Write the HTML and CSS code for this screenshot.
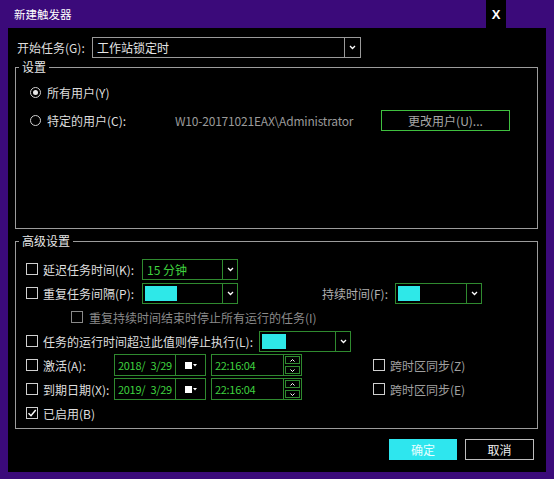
FILE: index.html
```html
<!DOCTYPE html>
<html lang="zh-CN">
<head>
<meta charset="utf-8">
<title>新建触发器</title>
<link rel="stylesheet" href="styles.css">
</head>
<body>
<div class="window">
  <div class="titlebar">
    <span class="title">新建触发器</span>
    <span class="close">X</span>
  </div>
  <div class="content">
    <div class="start-row">
      <span class="start-label">开始任务(G):</span>
      <div class="combo gray w-start">
        <span class="combo-text">工作站锁定时</span>
        <span class="drop gray"><svg width="7" height="5" viewBox="0 0 7 5"><path d="M1 1l2.5 2.5L6 1" stroke="#fff" fill="none" stroke-width="1.3"/></svg></span>
      </div>
    </div>

    <div class="group g-settings">
      <span class="legend">设置</span>
      <div class="radio-row">
        <span class="radio on"></span>
        <span class="rlabel">所有用户(Y)</span>
      </div>
      <div class="radio-row second">
        <span class="radio"></span>
        <span class="rlabel rl-wide">特定的用户(C):</span>
        <span class="user">W10-20171021EAX\Administrator</span>
        <span class="btn-change">更改用户(U)...</span>
      </div>
    </div>

    <div class="group g-adv">
      <span class="legend">高级设置</span>

      <div class="row">
        <span class="cb"></span>
        <span class="lbl l-99">延迟任务时间(K):</span>
        <div class="combo green w96">
          <span class="combo-text green-text">15 分钟</span>
          <span class="drop"><svg width="7" height="5" viewBox="0 0 7 5"><path d="M1 1l2.5 2.5L6 1" stroke="#fff" fill="none" stroke-width="1.3"/></svg></span>
        </div>
      </div>

      <div class="row">
        <span class="cb"></span>
        <span class="lbl l-99">重复任务间隔(P):</span>
        <div class="combo green w96">
          <span class="combo-text"><span class="cyan c32"></span></span>
          <span class="drop"><svg width="7" height="5" viewBox="0 0 7 5"><path d="M1 1l2.5 2.5L6 1" stroke="#fff" fill="none" stroke-width="1.3"/></svg></span>
        </div>
        <span class="lbl l-dur">持续时间(F):</span>
        <div class="combo green w87">
          <span class="combo-text"><span class="cyan c22"></span></span>
          <span class="drop"><svg width="7" height="5" viewBox="0 0 7 5"><path d="M1 1l2.5 2.5L6 1" stroke="#fff" fill="none" stroke-width="1.3"/></svg></span>
        </div>
      </div>

      <div class="row sub">
        <span class="cb dim"></span>
        <span class="lbl dim-text">重复持续时间结束时停止所有运行的任务(I)</span>
      </div>

      <div class="row">
        <span class="cb"></span>
        <span class="lbl l-216">任务的运行时间超过此值则停止执行(L):</span>
        <div class="combo green w92">
          <span class="combo-text"><span class="cyan c24"></span></span>
          <span class="drop"><svg width="7" height="5" viewBox="0 0 7 5"><path d="M1 1l2.5 2.5L6 1" stroke="#fff" fill="none" stroke-width="1.3"/></svg></span>
        </div>
      </div>

      <div class="row">
        <span class="cb"></span>
        <span class="lbl l-71">激活(A):</span>
        <div class="date">
          <span class="date-text">2018/ 3/29</span>
          <span class="cal"><span class="sq"></span><svg width="4" height="3" viewBox="0 0 4 3"><path d="M0 0h4L2 2.5z" fill="#fff"/></svg></span>
        </div>
        <div class="time">
          <span class="date-text">22:16:04</span>
          <span class="spin">
            <span class="sp"><svg width="5" height="3" viewBox="0 0 5 3"><path d="M0.5 2.5L2.5 0.5 4.5 2.5" stroke="#fff" fill="none" stroke-width="1"/></svg></span>
            <span class="sp"><svg width="5" height="3" viewBox="0 0 5 3"><path d="M0.5 0.5L2.5 2.5 4.5 0.5" stroke="#fff" fill="none" stroke-width="1"/></svg></span>
          </span>
        </div>
        <span class="cb tz"></span>
        <span class="lbl tz-text">跨时区同步(Z)</span>
      </div>

      <div class="row">
        <span class="cb"></span>
        <span class="lbl l-71">到期日期(X):</span>
        <div class="date">
          <span class="date-text">2019/ 3/29</span>
          <span class="cal"><span class="sq"></span><svg width="4" height="3" viewBox="0 0 4 3"><path d="M0 0h4L2 2.5z" fill="#fff"/></svg></span>
        </div>
        <div class="time">
          <span class="date-text">22:16:04</span>
          <span class="spin">
            <span class="sp"><svg width="5" height="3" viewBox="0 0 5 3"><path d="M0.5 2.5L2.5 0.5 4.5 2.5" stroke="#fff" fill="none" stroke-width="1"/></svg></span>
            <span class="sp"><svg width="5" height="3" viewBox="0 0 5 3"><path d="M0.5 0.5L2.5 2.5 4.5 0.5" stroke="#fff" fill="none" stroke-width="1"/></svg></span>
          </span>
        </div>
        <span class="cb tz"></span>
        <span class="lbl tz-text">跨时区同步(E)</span>
      </div>

      <div class="row">
        <span class="cb checked"><svg width="10" height="10" viewBox="0 0 10 10"><path d="M1.5 5.2L4 7.7 8.7 2" stroke="#fff" fill="none" stroke-width="1.5"/></svg></span>
        <span class="lbl">已启用(B)</span>
      </div>
    </div>

    <div class="buttons">
      <span class="btn ok">确定</span>
      <span class="btn cancel">取消</span>
    </div>
  </div>
</div>
</body>
</html>
```

FILE: styles.css
```css
* { box-sizing: border-box; }
html, body { margin: 0; padding: 0; }
body {
  width: 554px;
  height: 479px;
  background: #3b0a7a;
  font-family: "Noto Sans CJK SC", "Noto Sans", sans-serif;
  font-size: 12px;
  color: #dedede;
  overflow: hidden;
}
.window { width: 554px; height: 479px; }
.titlebar {
  height: 28px;
  display: flex;
  align-items: center;
  padding-left: 14px;
  color: #fff;
}
.title { flex: 1; font-size: 11.5px; line-height: 28px; }
.close {
  width: 20px;
  height: 28px;
  margin-right: 48px;
  background: #000;
  color: #fff;
  font-family: "Liberation Sans", Arial, sans-serif;
  font-weight: bold;
  font-size: 13px;
  display: flex;
  align-items: center;
  justify-content: center;
}
.content {
  margin: 0 8px;
  height: 444px;
  background: #000;
  display: flex;
  flex-direction: column;
  overflow: hidden;
}
.start-row {
  margin-top: 9px;
  padding-left: 9px;
  display: flex;
  align-items: center;
  height: 21px;
}
.start-label { width: 75px; white-space: nowrap; }

.combo {
  display: flex;
  height: 21px;
  border: 1px solid #2f8a2f;
  align-items: stretch;
}
.combo.gray { border-color: #9a9a9a; }
.w-start { width: 269px; }
.w96 { width: 96px; }
.w87 { width: 87px; }
.w92 { width: 92px; }
.combo-text {
  flex: 1;
  display: flex;
  align-items: center;
  padding-left: 4px;
  white-space: nowrap;
  color: #e6e6e6;
}
.green-text { color: #3fd23f; }
.drop {
  width: 15px;
  border-left: 1px solid #2f8a2f;
  display: flex;
  align-items: center;
  justify-content: center;
}
.drop.gray { width: 16px; border-left-color: #9a9a9a; }
.cyan { display: block; height: 15px; background: #2ee8e8; margin-left: -2px; }
.c32 { width: 32px; }
.c22 { width: 22px; }
.c24 { width: 24px; }

.group {
  position: relative;
  border: 1px solid #9c9c9c;
  margin-left: 7px;
  margin-right: 8px;
}
.legend {
  position: absolute;
  top: -9px;
  left: 3px;
  padding: 0 3px;
  background: #000;
  line-height: 16px;
  color: #e6e6e6;
}
.g-settings {
  margin-top: 9px;
  height: 162px;
  padding: 14px 0 0 14px;
}
.radio-row {
  display: flex;
  align-items: center;
  height: 20px;
}
.radio-row.second { margin-top: 8px; height: 21px; }
.radio {
  width: 11px;
  height: 11px;
  border: 1px solid #d0d0d0;
  border-radius: 50%;
  margin-right: 6px;
  display: flex;
  align-items: center;
  justify-content: center;
  flex: none;
}
.radio.on::after {
  content: "";
  width: 5px;
  height: 5px;
  border-radius: 50%;
  background: #e8e8e8;
}
.rl-wide { width: 128px; }
.user {
  width: 206px;
  color: #9a9a9a;
  white-space: nowrap;
  letter-spacing: -0.2px;
}
.btn-change {
  width: 129px;
  height: 21px;
  border: 1px solid #3fbf3f;
  color: #a8a8a8;
  display: flex;
  align-items: center;
  justify-content: center;
}

.g-adv {
  margin-top: 12px;
  height: 188px;
  padding: 16px 0 0 10px;
  display: flex;
  flex-direction: column;
  gap: 2px;
}
.row {
  display: flex;
  align-items: center;
  height: 22px;
}
.row.sub { padding-left: 45px; }
.cb {
  width: 12px;
  height: 12px;
  border: 1px solid #d0d0d0;
  margin-right: 5px;
  flex: none;
  display: flex;
  align-items: center;
  justify-content: center;
}
.cb.dim { border-color: #8a8a8a; margin-right: 6px; }
.dim-text { color: #8a8a8a; }
.lbl { white-space: nowrap; }
.l-99 { width: 99px; }
.l-216 { width: 216px; }
.l-71 { width: 71px; }
.l-dur { width: 157px; text-align: right; padding-right: 7px; color: #b0b0b0; }

.date, .time {
  display: flex;
  height: 22px;
  border: 1px solid #2f8a2f;
}
.date { width: 92px; }
.time { width: 91px; margin-left: 5px; }
.date-text {
  flex: 1;
  display: flex;
  align-items: center;
  padding-left: 3px;
  color: #3fd23f;
  white-space: pre;
  font-size: 11px;
  letter-spacing: -0.3px;
  word-spacing: 3px;
}
.cal {
  width: 30px;
  border-left: 1px solid #2f8a2f;
  display: flex;
  align-items: center;
  justify-content: center;
  gap: 1px;
}
.sq { width: 7px; height: 7px; background: #fff; }
.spin {
  width: 18px;
  display: flex;
  flex-direction: column;
  border-left: 1px solid #2f8a2f;
}
.sp {
  flex: 1;
  display: flex;
  align-items: center;
  justify-content: center;
  border: 1px solid #2f8a2f;
  margin: 1px;
}
.cb.tz { margin-left: 71px; }
.tz-text { color: #a0a0a0; }

.buttons {
  margin-top: 10px;
  display: flex;
  justify-content: flex-end;
  gap: 8px;
  padding-right: 12px;
}
.btn {
  height: 21px;
  display: flex;
  align-items: center;
  justify-content: center;
}
.ok { width: 68px; background: #2ee6ee; color: #e8ffff; }
.cancel { width: 69px; border: 1px solid #bdbdbd; color: #f0f0f0; }
```
